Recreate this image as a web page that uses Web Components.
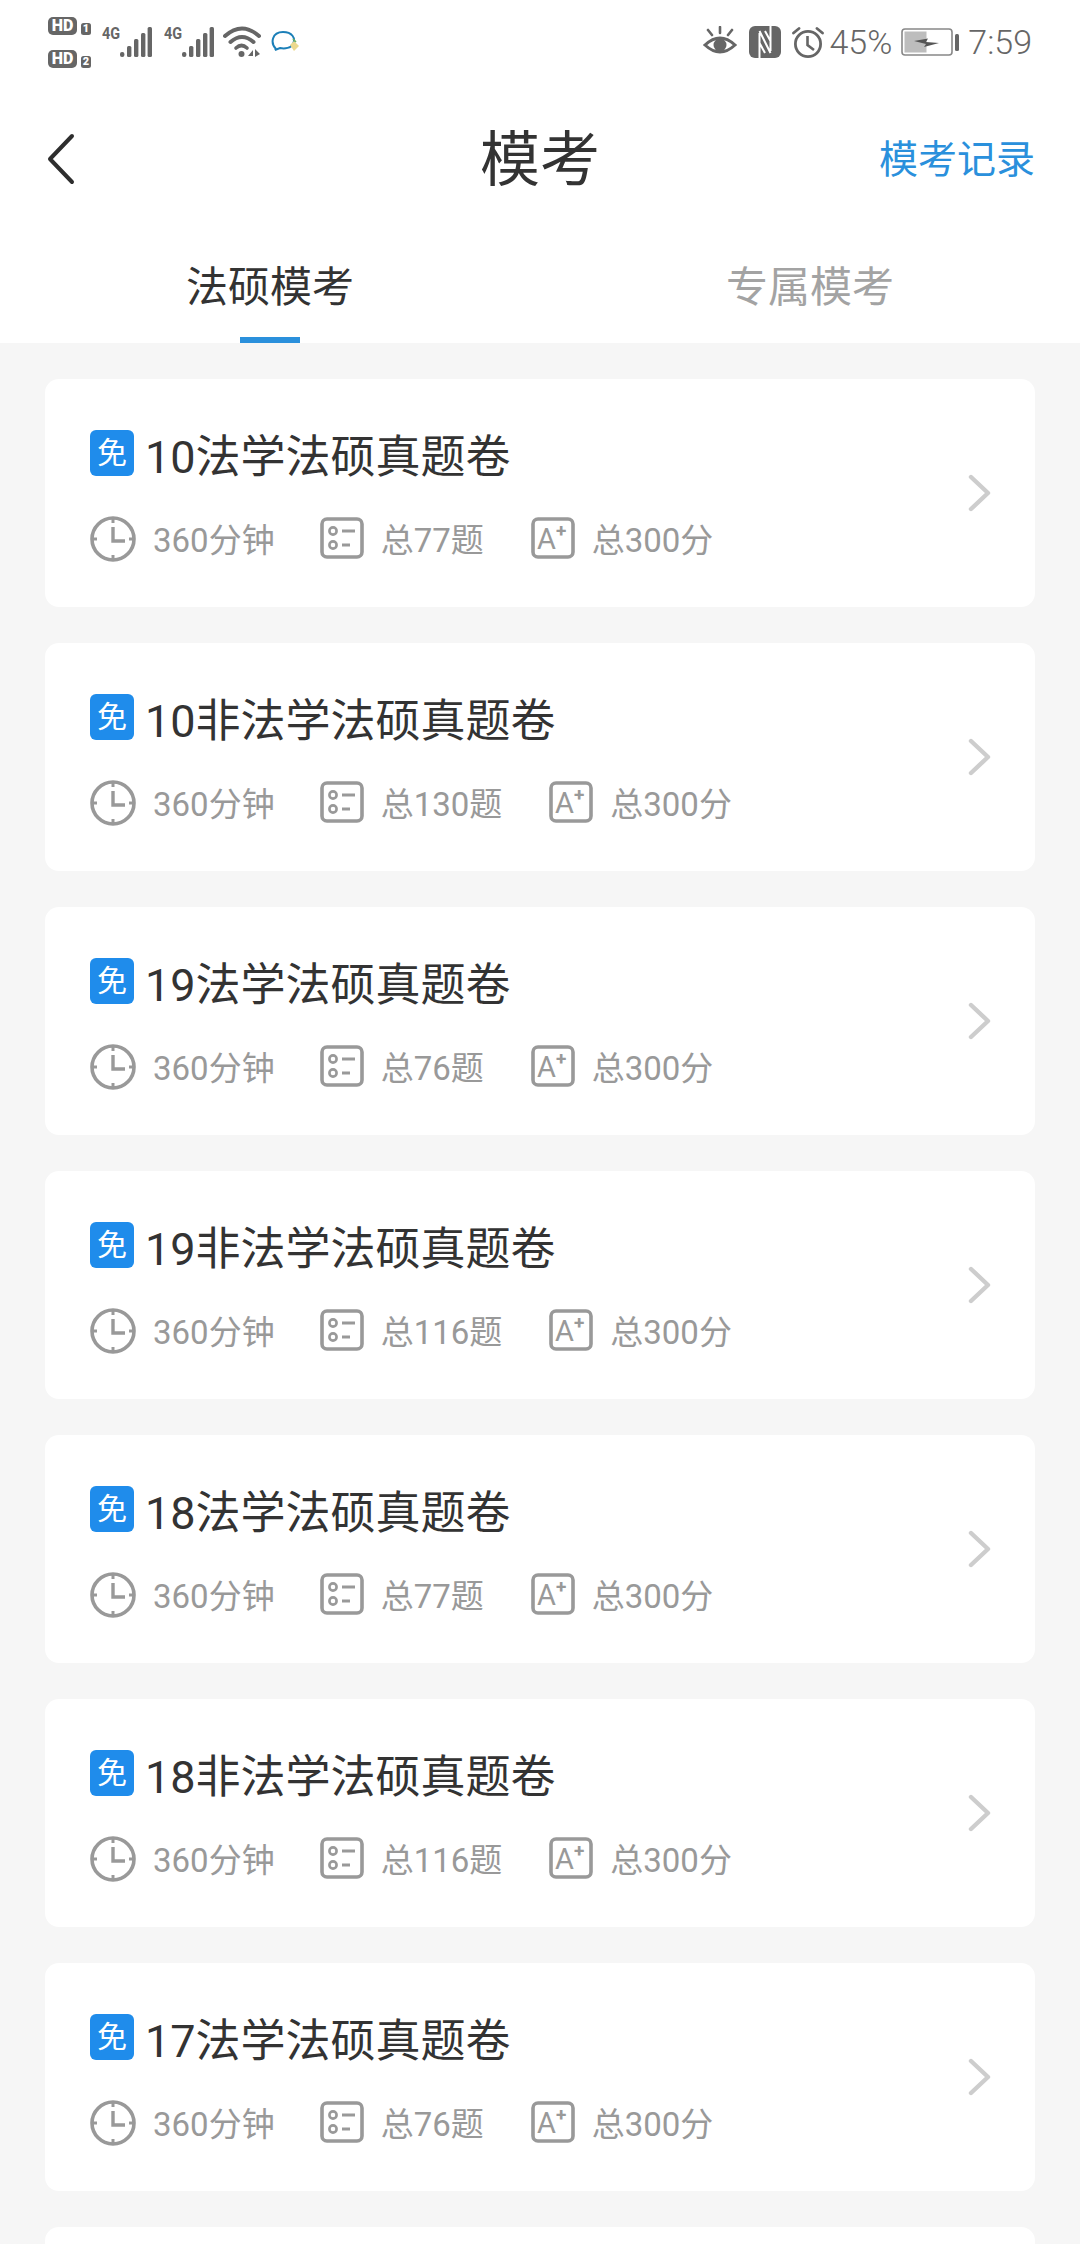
<!DOCTYPE html>
<html lang="zh-CN">
<head>
<meta charset="utf-8">
<title>模考</title>
<style>
  html, body { margin: 0; height: 2244px; overflow: hidden; background: #f6f6f6; }
  body { font-family: Roboto, "Noto Sans CJK SC", sans-serif; }
  mock-list { margin-top: 36px; }
</style>
</head>
<body>
<status-bar></status-bar>
<nav-header action="模考记录">模考</nav-header>
<tab-bar first="法硕模考" second="专属模考"></tab-bar>
<mock-list>
  <exam-card time="360分钟" total="总77题" score="总300分">10法学法硕真题卷</exam-card>
  <exam-card time="360分钟" total="总130题" score="总300分">10非法学法硕真题卷</exam-card>
  <exam-card time="360分钟" total="总76题" score="总300分">19法学法硕真题卷</exam-card>
  <exam-card time="360分钟" total="总116题" score="总300分">19非法学法硕真题卷</exam-card>
  <exam-card time="360分钟" total="总77题" score="总300分">18法学法硕真题卷</exam-card>
  <exam-card time="360分钟" total="总116题" score="总300分">18非法学法硕真题卷</exam-card>
  <exam-card time="360分钟" total="总76题" score="总300分">17法学法硕真题卷</exam-card>
  <exam-card empty></exam-card>
</mock-list>

<script>
// Barra de estado del teléfono
class StatusBar extends HTMLElement {
    constructor() {
        super();
        this.attachShadow({ mode: 'open' });
    }

    connectedCallback() {
        this.render();
    }

    // Barras de cobertura con su etiqueta 4G
    signal() {
        return `
            <div class="signal">
                <span class="net">4G</span>
                <svg width="32" height="32" viewBox="0 0 32 32">
                    <rect x="0" y="26" width="4.4" height="5" rx="2" fill="#666"/>
                    <rect x="7" y="20" width="4.4" height="11" rx="1.5" fill="#666"/>
                    <rect x="14" y="13" width="4.4" height="18" rx="1.5" fill="#666"/>
                    <rect x="21" y="7" width="4.4" height="24" rx="1.5" fill="#666"/>
                    <rect x="27.6" y="1" width="4.4" height="30" rx="1.5" fill="#666"/>
                </svg>
            </div>`;
    }

    // Etiqueta HD con el número de la SIM
    sim(number) {
        return `<div class="sim"><span class="hd-box">HD</span><span class="sim-no">${number}</span></div>`;
    }

    render() {
        this.shadowRoot.innerHTML = `
            <style>
                :host {
                    display: flex;
                    align-items: center;
                    justify-content: space-between;
                    height: 84px;
                    padding: 0 48px;
                    background: #fff;
                    color: #666;
                    font-family: Roboto, "Noto Sans CJK SC", sans-serif;
                }
                svg { display: block; }
                .group { display: flex; align-items: center; }
                .sims { display: flex; flex-direction: column; gap: 15px; margin-right: 11px; }
                .sim { display: flex; align-items: flex-end; gap: 4px; }
                .hd-box {
                    width: 29px;
                    height: 18px;
                    border-radius: 5px;
                    background: #666;
                    color: #fff;
                    font-size: 16px;
                    font-weight: 900;
                    line-height: 18px;
                    text-align: center;
                }
                .sim-no {
                    width: 10px;
                    height: 12px;
                    border-radius: 2.5px;
                    background: #666;
                    color: #fff;
                    font-size: 11px;
                    font-weight: 900;
                    line-height: 12px;
                    text-align: center;
                }
                .signal { display: flex; height: 32px; }
                .net {
                    width: 18px;
                    font-size: 17px;
                    font-weight: 700;
                    line-height: 15px;
                    white-space: nowrap;
                    transform: scaleX(.85);
                    transform-origin: left top;
                }
                .sig2 { margin-left: 12px; }
                .wifi { margin-left: 9px; }
                .chat { margin-left: 10px; }
                .nfc { margin-left: 12px; }
                .alarm { margin-left: 11px; }
                .pct { margin-left: 5px; font-size: 34px; font-weight: 300; line-height: 40px; }
                .bat { margin-left: 9px; }
                .time { margin-left: 9px; font-size: 34px; font-weight: 300; line-height: 40px; }
            </style>
            <div class="group">
                <div class="sims">${this.sim(1)}${this.sim(2)}</div>
                ${this.signal()}
                <span class="sig2">${this.signal()}</span>
                <svg class="wifi" width="38" height="32" viewBox="0 0 38 32">
                    <path d="M2 10 Q19 -5 36 10" fill="none" stroke="#666" stroke-width="4" stroke-linecap="round"/>
                    <path d="M7.5 16 Q19 6 30.5 16" fill="none" stroke="#666" stroke-width="4" stroke-linecap="round"/>
                    <path d="M13 22 Q18.5 17 24 22" fill="none" stroke="#666" stroke-width="3.6" stroke-linecap="round"/>
                    <circle cx="18.5" cy="28" r="3" fill="#666"/>
                    <path d="M25 30 L30 24 V30 Z M32 23 V31 L37 28 Z" fill="#666"/>
                </svg>
                <svg class="chat" width="29" height="24" viewBox="0 0 29 24">
                    <path d="M5 19 C-1 13 1 2 12 2 C21 2 25 8 22 14 C20 18 14 19 9 18 L4 20 Z" fill="none" stroke="#1b7fb8" stroke-width="2"/>
                    <path d="M19 15 L23 11 L28 16 L23 21 Z" fill="#ecd98e"/>
                    <path d="M22 9 L25 12" stroke="#6fb35e" stroke-width="1.6"/>
                </svg>
            </div>
            <div class="group">
                <svg width="34" height="32" viewBox="0 0 34 32">
                    <path d="M2 19 Q17 5 32 19 Q17 33 2 19 Z" fill="none" stroke="#666" stroke-width="3"/>
                    <circle cx="17" cy="19" r="6.5" fill="#666"/>
                    <path d="M17 1 V7 M5 4 L9 9 M29 4 L25 9" stroke="#666" stroke-width="2.6" stroke-linecap="round"/>
                </svg>
                <svg class="nfc" width="32" height="32" viewBox="0 0 32 32">
                    <rect width="32" height="32" rx="6" fill="#666"/>
                    <path d="M10.5 32 V7 M21.5 0 V25 M10.5 5 L21.5 27 M16 5 L21.5 15 M10.5 17 L16 27" fill="none" stroke="#fff" stroke-width="2"/>
                </svg>
                <svg class="alarm" width="32" height="31" viewBox="0 0 32 31">
                    <circle cx="16" cy="17" r="12.6" fill="none" stroke="#666" stroke-width="2.8"/>
                    <path d="M15.5 9 V18 L22 23" fill="none" stroke="#666" stroke-width="2.6"/>
                    <path d="M1.5 6 L7 1.5 M30.5 6 L25 1.5" stroke="#666" stroke-width="2.8" stroke-linecap="round"/>
                </svg>
                <span class="pct">45%</span>
                <svg class="bat" width="58" height="28" viewBox="0 0 58 28">
                    <rect x="1" y="1" width="50" height="26" rx="3" fill="none" stroke="#888" stroke-width="1.6"/>
                    <rect x="3.5" y="3.5" width="22" height="21" fill="#bdbdbd"/>
                    <rect x="54" y="6" width="4" height="17" rx="1.5" fill="#666"/>
                    <path d="M13 13 L27 10.5 L25 14 L38 15 L23 19 L25 16 Z" fill="#555"/>
                </svg>
                <span class="time">7:59</span>
            </div>`;
    }
}

// Cabecera con volver, título y acción
class NavHeader extends HTMLElement {
    constructor() {
        super();
        this.attachShadow({ mode: 'open' });
    }

    connectedCallback() {
        this.render();
    }

    render() {
        this.shadowRoot.innerHTML = `
            <style>
                :host {
                    display: grid;
                    grid-template-columns: 1fr auto 1fr;
                    align-items: center;
                    height: 148px;
                    padding: 0 45px;
                    background: #fff;
                    font-family: Roboto, "Noto Sans CJK SC", sans-serif;
                }
                svg { display: block; margin-top: 2px; }
                .title { padding-top: 6px; font-size: 60px; color: #333; line-height: 70px; }
                .action { justify-self: end; padding-top: 3px; font-size: 39px; color: #2a90dc; line-height: 50px; }
            </style>
            <svg width="34" height="52" viewBox="0 0 34 52">
                <path d="M27 3 L5 26 L27 49" fill="none" stroke="#2e2e2e" stroke-width="4" stroke-linecap="round" stroke-linejoin="round"/>
            </svg>
            <div class="title"><slot></slot></div>
            <div class="action">${this.getAttribute('action')}</div>`;
    }
}

// Pestañas del listado
class TabBar extends HTMLElement {
    constructor() {
        super();
        this.attachShadow({ mode: 'open' });
    }

    connectedCallback() {
        this.render();
    }

    render() {
        this.shadowRoot.innerHTML = `
            <style>
                :host {
                    display: grid;
                    grid-template-columns: 1fr 1fr;
                    height: 111px;
                    background: #fff;
                    font-family: Roboto, "Noto Sans CJK SC", sans-serif;
                }
                .tab {
                    display: flex;
                    flex-direction: column;
                    align-items: center;
                    justify-content: space-between;
                    padding-top: 30px;
                    font-size: 42px;
                    line-height: 52px;
                    color: #a3a3a3;
                }
                .tab.active { color: #333; }
                .tab.active::after {
                    content: "";
                    width: 60px;
                    height: 6px;
                    background: #2a90dc;
                }
            </style>
            <div class="tab active">${this.getAttribute('first')}</div>
            <div class="tab">${this.getAttribute('second')}</div>`;
    }
}

// Contenedor de las tarjetas
class MockList extends HTMLElement {
    constructor() {
        super();
        this.attachShadow({ mode: 'open' });
    }

    connectedCallback() {
        this.shadowRoot.innerHTML = `
            <style>
                :host {
                    display: flex;
                    flex-direction: column;
                    gap: 36px;
                    padding: 0 45px;
                }
            </style>
            <slot></slot>`;
    }
}

// Tarjeta de un examen
class ExamCard extends HTMLElement {
    constructor() {
        super();
        this.attachShadow({ mode: 'open' });
    }

    connectedCallback() {
        this.render();
    }

    render() {
        const body = this.hasAttribute('empty') ? '' : `
            <div class="info">
                <div class="head">
                    <span class="free">免</span>
                    <span class="name"><slot></slot></span>
                </div>
                <div class="meta">
                    <svg class="clock" width="46" height="46" viewBox="0 0 46 46">
                        <circle cx="23" cy="23" r="21" fill="none" stroke="#999" stroke-width="3.6"/>
                        <path d="M23 2 V7 M23 39 V44 M2 23 H7 M39 23 H44" stroke="#999" stroke-width="3"/>
                        <path d="M23 11 V25 H35" fill="none" stroke="#999" stroke-width="3.4"/>
                    </svg>
                    <span class="txt t1">${this.getAttribute('time')}</span>
                    <svg class="ic" width="44" height="42" viewBox="0 0 44 42">
                        <rect x="2" y="2" width="40" height="38" rx="5" fill="none" stroke="#999" stroke-width="3.6"/>
                        <circle cx="13" cy="14" r="3.6" fill="none" stroke="#999" stroke-width="2.6"/>
                        <circle cx="13" cy="28" r="3.6" fill="none" stroke="#999" stroke-width="2.6"/>
                        <path d="M22 14 H35 M22 28 H30" stroke="#999" stroke-width="3"/>
                    </svg>
                    <span class="txt">${this.getAttribute('total')}</span>
                    <svg class="ic" width="44" height="42" viewBox="0 0 44 42">
                        <rect x="2" y="2" width="40" height="38" rx="5" fill="none" stroke="#999" stroke-width="3.6"/>
                        <text x="6" y="32" font-size="29" fill="#999">A</text>
                        <text x="25" y="20" font-size="19" font-weight="700" fill="#999">+</text>
                    </svg>
                    <span class="txt">${this.getAttribute('score')}</span>
                </div>
            </div>
            <svg class="more" width="24" height="38" viewBox="0 0 24 38">
                <path d="M3 3 L20 19 L3 35" fill="none" stroke="#cdcdcd" stroke-width="4.4" stroke-linecap="round" stroke-linejoin="round"/>
            </svg>`;

        this.shadowRoot.innerHTML = `
            <style>
                :host {
                    display: flex;
                    align-items: center;
                    justify-content: space-between;
                    box-sizing: border-box;
                    height: 228px;
                    padding: 0 43px 0 45px;
                    background: #fff;
                    border-radius: 14px;
                    font-family: Roboto, "Noto Sans CJK SC", sans-serif;
                }
                svg { display: block; flex: none; }
                .info { align-self: flex-start; padding-top: 51px; }
                .head { display: flex; align-items: flex-start; gap: 11px; }
                .free {
                    width: 44px;
                    height: 46px;
                    border-radius: 6px;
                    background: #1f8ceb;
                    color: #fff;
                    font-size: 30px;
                    line-height: 46px;
                    text-align: center;
                }
                .name { font-size: 45px; line-height: 56px; color: #333; }
                .meta { display: flex; align-items: center; margin-top: 28px; color: #999; }
                .ic { margin-bottom: 3px; }
                .txt { margin-left: 17px; margin-right: 47px; padding-top: 4px; font-size: 33px; line-height: 46px; }
                .t1 { margin-right: 45px; }
            </style>
            ${body}`;
    }
}

customElements.define('status-bar', StatusBar);
customElements.define('nav-header', NavHeader);
customElements.define('tab-bar', TabBar);
customElements.define('mock-list', MockList);
customElements.define('exam-card', ExamCard);
</script>
</body>
</html>
